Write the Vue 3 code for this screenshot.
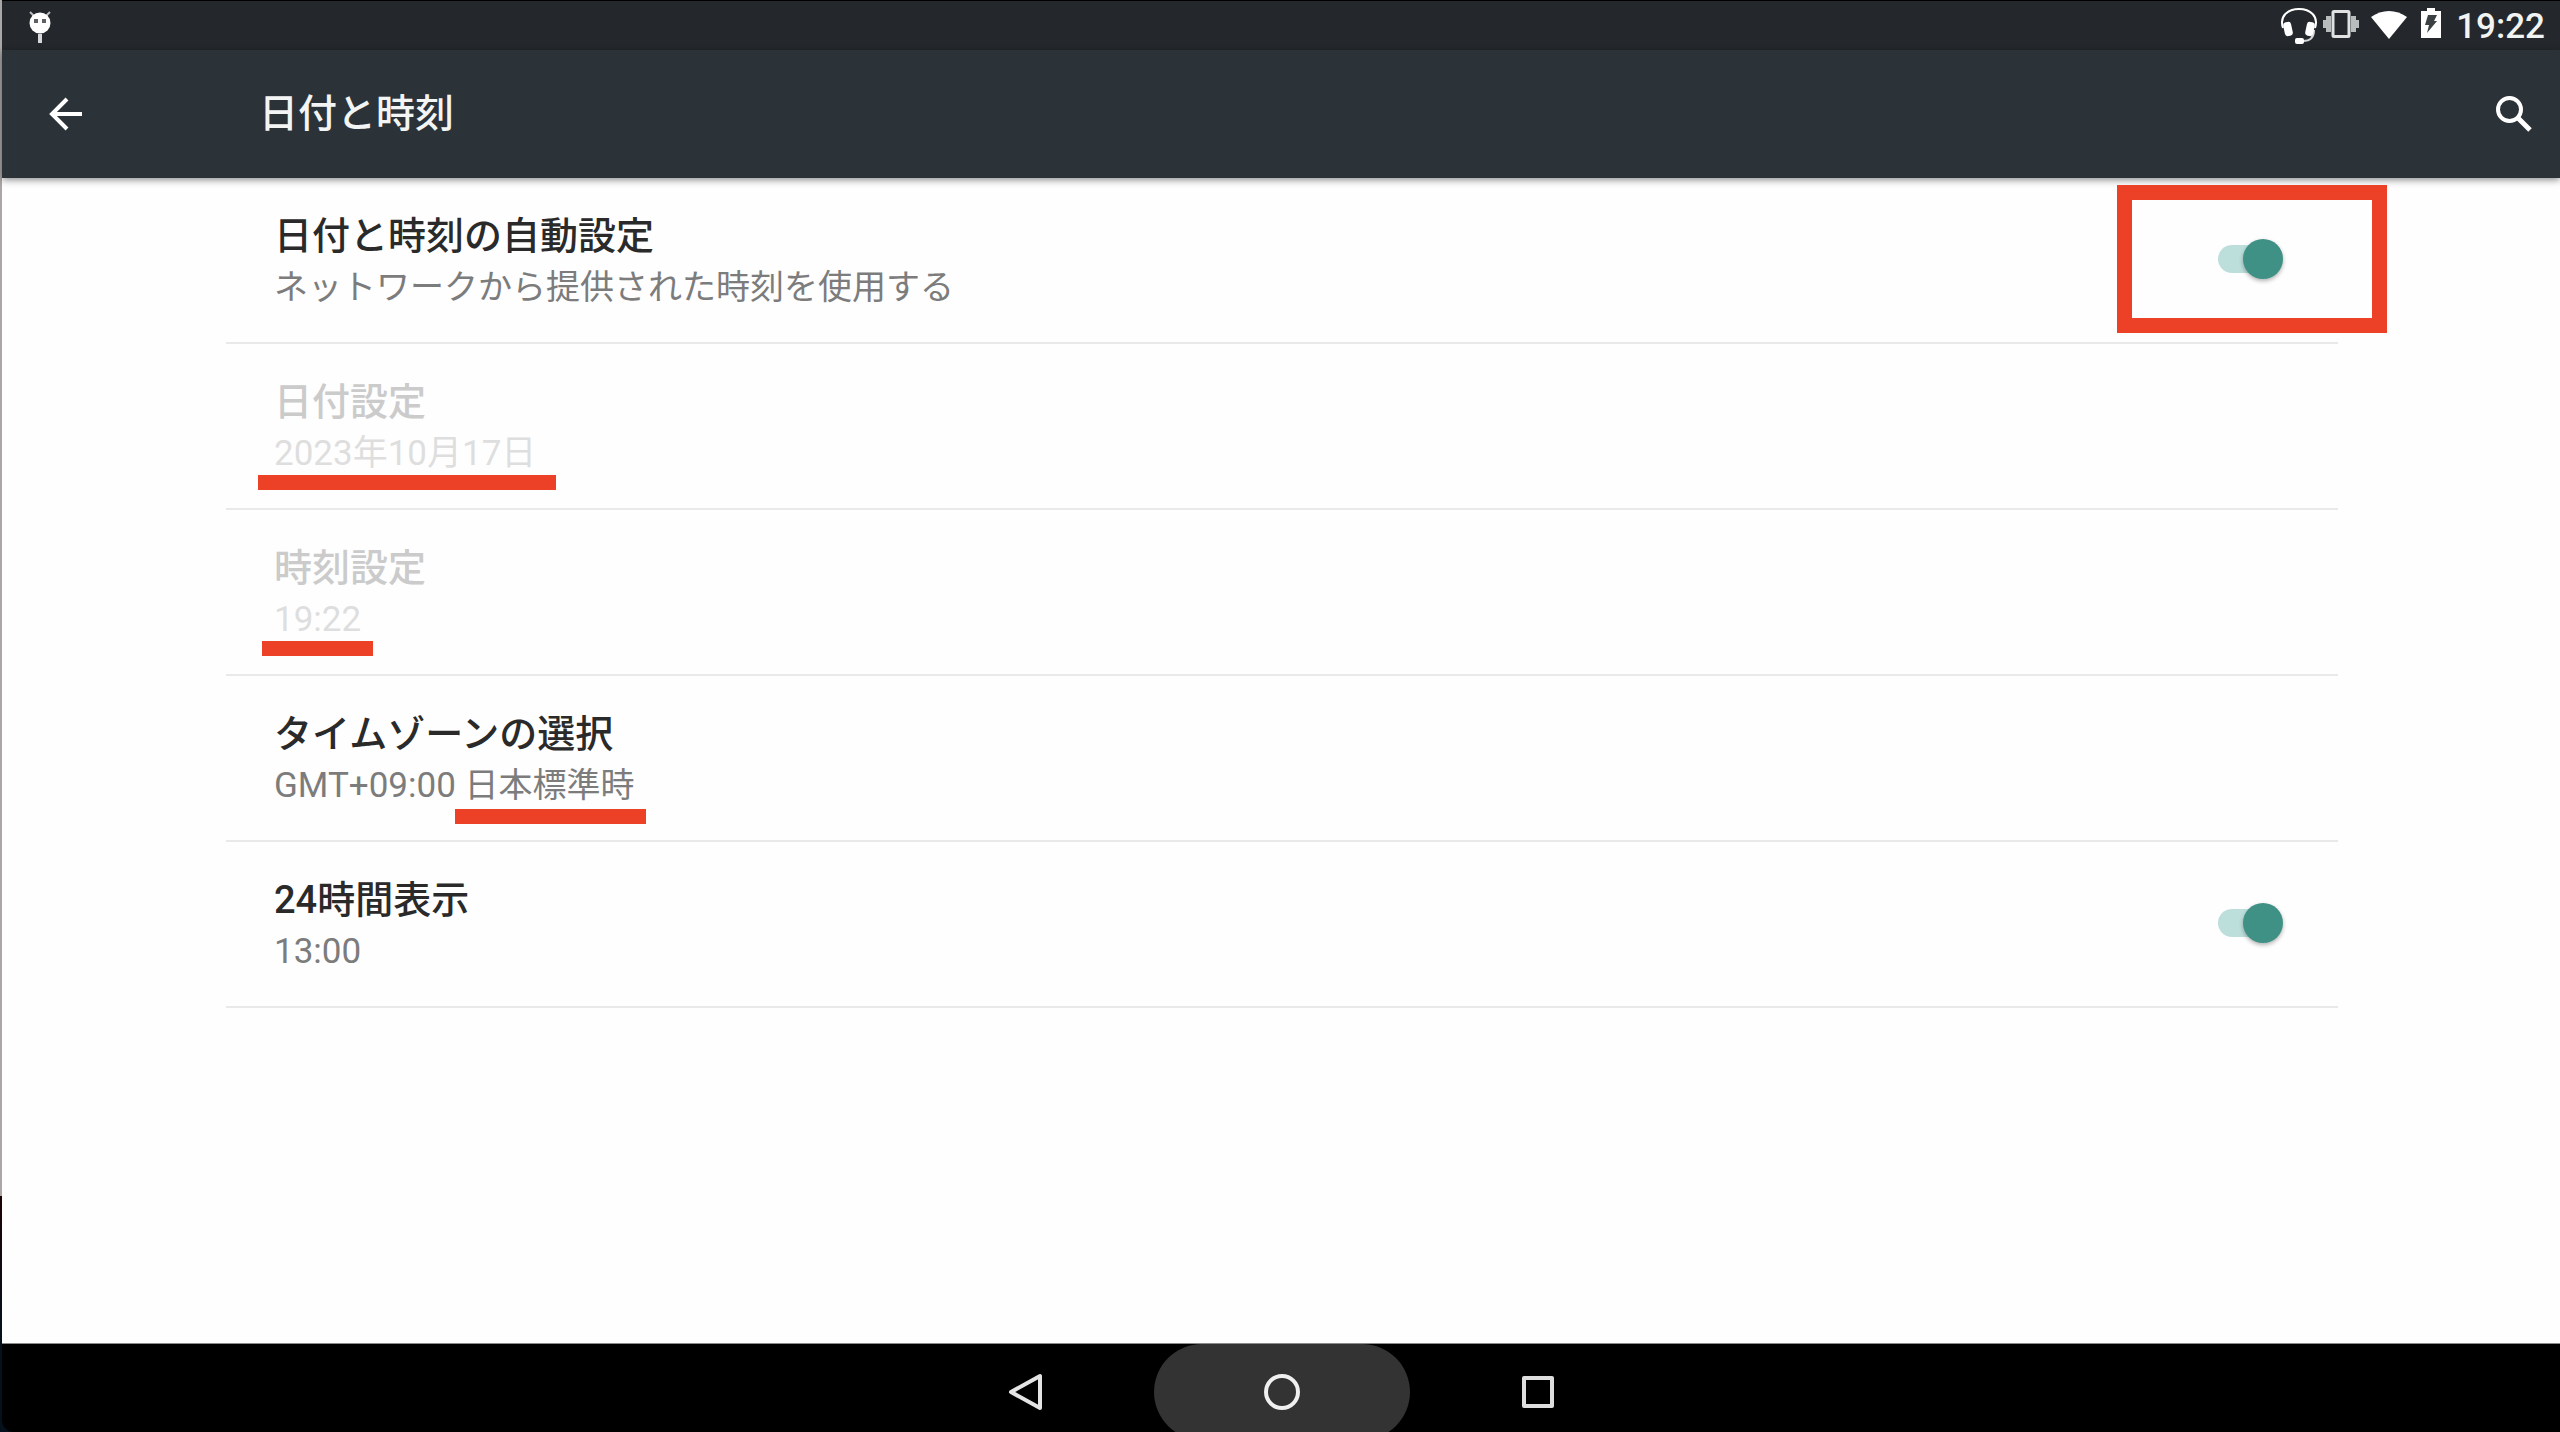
<template>
  <div class="screen">
    <!-- Status bar -->
    <header class="status-bar">
      <svg class="debug-icon" viewBox="0 0 24 34" aria-hidden="true">
        <path d="M2 1l5 5M22 1l-5 5" stroke="#b9bcbd" stroke-width="2" />
        <circle cx="12" cy="12" r="10.500" fill="#fff" />
        <rect x="6" y="8" width="4" height="4" fill="#5d6163" />
        <rect x="14" y="8" width="4" height="4" fill="#5d6163" />
        <rect x="10" y="23" width="4" height="9" fill="#d4d6d7" />
      </svg>

      <div class="status-icons">
        <svg width="36" height="36" viewBox="0 0 36 36" aria-hidden="true">
          <path d="M2 20C-2 8 7 1 18 1s20 7 16 19" fill="none" stroke="#fff" stroke-width="2" />
          <path d="M33 22c0 8-4 11-11 11" fill="none" stroke="#d4d6d7" stroke-width="2" />
          <rect x="3" y="14" width="8" height="14" rx="3" fill="#fff" transform="rotate(-12 7 21)" />
          <rect x="25" y="14" width="8" height="14" rx="3" fill="#fff" transform="rotate(12 29 21)" />
          <rect x="14" y="30" width="9" height="6" rx="2" fill="#fff" />
        </svg>
        <svg class="vibrate" width="36" height="28" viewBox="0 0 36 28" aria-hidden="true">
          <rect x="10" y="1.500" width="16" height="25" rx="1" fill="none" stroke="#e0e2e2" stroke-width="3" />
          <path d="M5.500 6v16M30.500 6v16" stroke="#b9bcbd" stroke-width="5" />
          <path d="M1.500 10v8M34.500 10v8" stroke="#b9bcbd" stroke-width="3" />
        </svg>
        <svg class="wifi" width="36" height="28" viewBox="0 0 36 28" aria-hidden="true">
          <path d="M0 6C11-2 25-2 36 6L18 28z" fill="#fff" />
        </svg>
        <svg class="battery" width="22" height="30" viewBox="0 0 22 30" aria-hidden="true">
          <path d="M1 3h6V0h8v3h6v27H1z" fill="#fff" />
          <path d="M8 7h9l-3 6h3L7 25l2-8H5z" fill="#3b4043" />
        </svg>
        <time class="clock">19:22</time>
      </div>
    </header>

    <!-- App bar -->
    <div class="app-bar">
      <button class="icon-button" aria-label="戻る">
        <svg width="34" height="34" viewBox="0 0 34 34">
          <path d="M18 2L3 17l15 15M3 17h30" fill="none" stroke="#fff" stroke-width="4" />
        </svg>
      </button>
      <h1 class="app-title">日付と時刻</h1>
      <button class="icon-button" aria-label="検索">
        <svg width="36" height="36" viewBox="0 0 36 36">
          <circle cx="13.500" cy="13.500" r="11.500" fill="none" stroke="#fff" stroke-width="4" />
          <path d="M22 22l12 12" stroke="#fff" stroke-width="5" />
        </svg>
      </button>
    </div>

    <!-- Settings -->
    <main class="content">
      <ul class="settings">
        <li v-for="item in items" :key="item.id">
          <label v-if="item.toggle" class="row" :for="item.id">
            <span class="texts">
              <span class="title">{{ item.title }}</span>
              <span class="summary" :class="{ numeric: item.numeric }">{{ item.summary }}</span>
            </span>
            <span class="switch-box" :class="{ framed: item.framed }">
              <input :id="item.id" v-model="item.on" class="switch" type="checkbox" role="switch" />
            </span>
          </label>
          <button v-else class="row" :disabled="item.disabled">
            <span class="texts">
              <span class="title">{{ item.title }}</span>
              <span class="summary numeric"
                >{{ item.summary }}<span class="marked" :class="item.id">{{ item.marked }}</span></span
              >
            </span>
          </button>
        </li>
      </ul>
    </main>

    <!-- Navigation bar -->
    <nav class="nav-bar">
      <button class="nav-button" aria-label="戻る">
        <svg width="36" height="40" viewBox="0 0 36 40">
          <path d="M32 4v32L3 20z" fill="none" stroke="#e4e4e4" stroke-width="4" stroke-linejoin="round" />
        </svg>
      </button>
      <button class="nav-button pressed" aria-label="ホーム">
        <svg width="36" height="36" viewBox="0 0 36 36">
          <circle cx="18" cy="18" r="16" fill="none" stroke="#f0f0f0" stroke-width="4" />
        </svg>
      </button>
      <button class="nav-button" aria-label="最近使ったアプリ">
        <svg width="32" height="32" viewBox="0 0 32 32">
          <rect x="2" y="2" width="28" height="28" fill="none" stroke="#dedede" stroke-width="4" stroke-linejoin="round" />
        </svg>
      </button>
    </nav>
  </div>
</template>

<script setup>
import { ref } from "vue";

const items = ref([
  {
    id: "auto-time",
    title: "日付と時刻の自動設定",
    summary: "ネットワークから提供された時刻を使用する",
    toggle: true,
    framed: true,
    on: true,
  },
  { id: "date", title: "日付設定", summary: "", marked: "2023年10月17日", disabled: true },
  { id: "time", title: "時刻設定", summary: "", marked: "19:22", disabled: true },
  { id: "zone", title: "タイムゾーンの選択", summary: "GMT+09:00 ", marked: "日本標準時" },
  {
    id: "hour-format",
    title: "24時間表示",
    summary: "13:00",
    numeric: true,
    toggle: true,
    on: true,
  },
]);
</script>

<style>
body {
  margin: 0;
}
</style>

<style scoped>
.screen {
  display: flex;
  flex-direction: column;
  min-height: 100vh;
  box-sizing: border-box;
  padding-left: 2px;
  background: linear-gradient(#aaa6a6 0 1196px, #1e0205 1196px, #04101c 1330px);
  font-family: Roboto, "Noto Sans CJK JP", sans-serif;
}

button {
  margin: 0;
  padding: 0;
  border: none;
  background: none;
  font: inherit;
  text-align: left;
}

svg {
  display: block;
}

.status-bar {
  display: flex;
  justify-content: space-between;
  align-items: flex-start;
  box-sizing: border-box;
  height: 50px;
  padding: 7px 15px 0 26px;
  border-top: 1px solid #000;
  background: #24282c;
}

.debug-icon {
  width: 24px;
  height: 34px;
  margin-top: 3px;
}

.status-icons {
  display: flex;
  align-items: flex-start;
}

.vibrate {
  margin: 2px 12px 0 6px;
}

.wifi {
  margin-top: 3px;
}

.battery {
  margin: 0 14px 0 13px;
}

.clock {
  color: #f2f3f3;
  font-size: 35px;
  font-weight: 500;
  line-height: 38px;
}

.app-bar {
  position: relative;
  display: flex;
  align-items: center;
  height: 128px;
  padding: 0 28px 0 47px;
  background: #2b3238;
  box-shadow: 0 2px 7px rgba(0, 0, 0, 0.45);
}

.app-title {
  flex: 1;
  margin: 0 0 0 176px;
  color: #f3f4f4;
  font-size: 39px;
  font-weight: 500;
  line-height: 52px;
}

.content {
  flex: 1;
  background: #fefefe;
}

.settings {
  margin: 0 222px 0 224px;
  padding: 0;
  list-style: none;
}

.row {
  display: flex;
  align-items: center;
  justify-content: space-between;
  box-sizing: border-box;
  width: 100%;
  height: 166px;
  padding: 0 0 0 48px;
  border-bottom: 2px solid #e9e9e9;
}

.texts {
  display: flex;
  flex-direction: column;
  padding-top: 4px;
}

.title {
  color: #2a2a2a;
  font-size: 38px;
  font-weight: 500;
  line-height: 51px;
}

.summary {
  color: #7c7c7c;
  font-size: 34px;
  line-height: 51px;
}

/* Roboto runs a little small beside the kana */
.numeric {
  font-size: 35px;
}

.row:disabled .title {
  color: #cbcbcb;
}

.row:disabled .summary {
  color: #dedede;
}

.switch-box {
  position: relative;
  margin: 0 54px 2px 0;
}

/* red frame round the switch */
.framed::after {
  content: "";
  position: absolute;
  inset: -54px -103px -54px -101px;
  border: 15px solid #ec4027;
}

.switch {
  appearance: none;
  position: relative;
  display: block;
  width: 66px;
  height: 40px;
  margin: 0;
}

.switch::before {
  content: "";
  position: absolute;
  inset: 6px 6px 6px 0;
  border-radius: 14px;
  background: #c4c4c4;
}

.switch::after {
  content: "";
  position: absolute;
  top: 0;
  left: 0;
  width: 40px;
  height: 40px;
  border-radius: 50%;
  background: #f1f1f1;
  box-shadow: 0 2px 4px rgba(0, 0, 0, 0.3);
}

.switch:checked::before {
  background: #bddfdc;
}

.switch:checked::after {
  left: 25px;
  background: #409185;
}

/* red underlines below the values */
.marked {
  position: relative;
}

.marked::after {
  content: "";
  position: absolute;
  top: calc(100% + 1px);
  left: -12px;
  right: -12px;
  height: 15px;
  background: #ec4027;
}

.date::after {
  left: -16px;
  right: -20px;
}

.zone {
  font-size: 34px;
}

.zone::after {
  top: calc(100% + 4px);
  left: -9px;
}

.nav-bar {
  display: flex;
  justify-content: center;
  height: 88px;
  padding-left: 2px;
  overflow: hidden;
  border-top: 1px solid #8a8a8a;
  border-bottom-left-radius: 12px;
  background: #000;
}

.nav-button {
  display: flex;
  align-items: center;
  justify-content: center;
  width: 256px;
  height: 96px;
  border-radius: 48px;
}

.pressed {
  background: #333;
}
</style>
